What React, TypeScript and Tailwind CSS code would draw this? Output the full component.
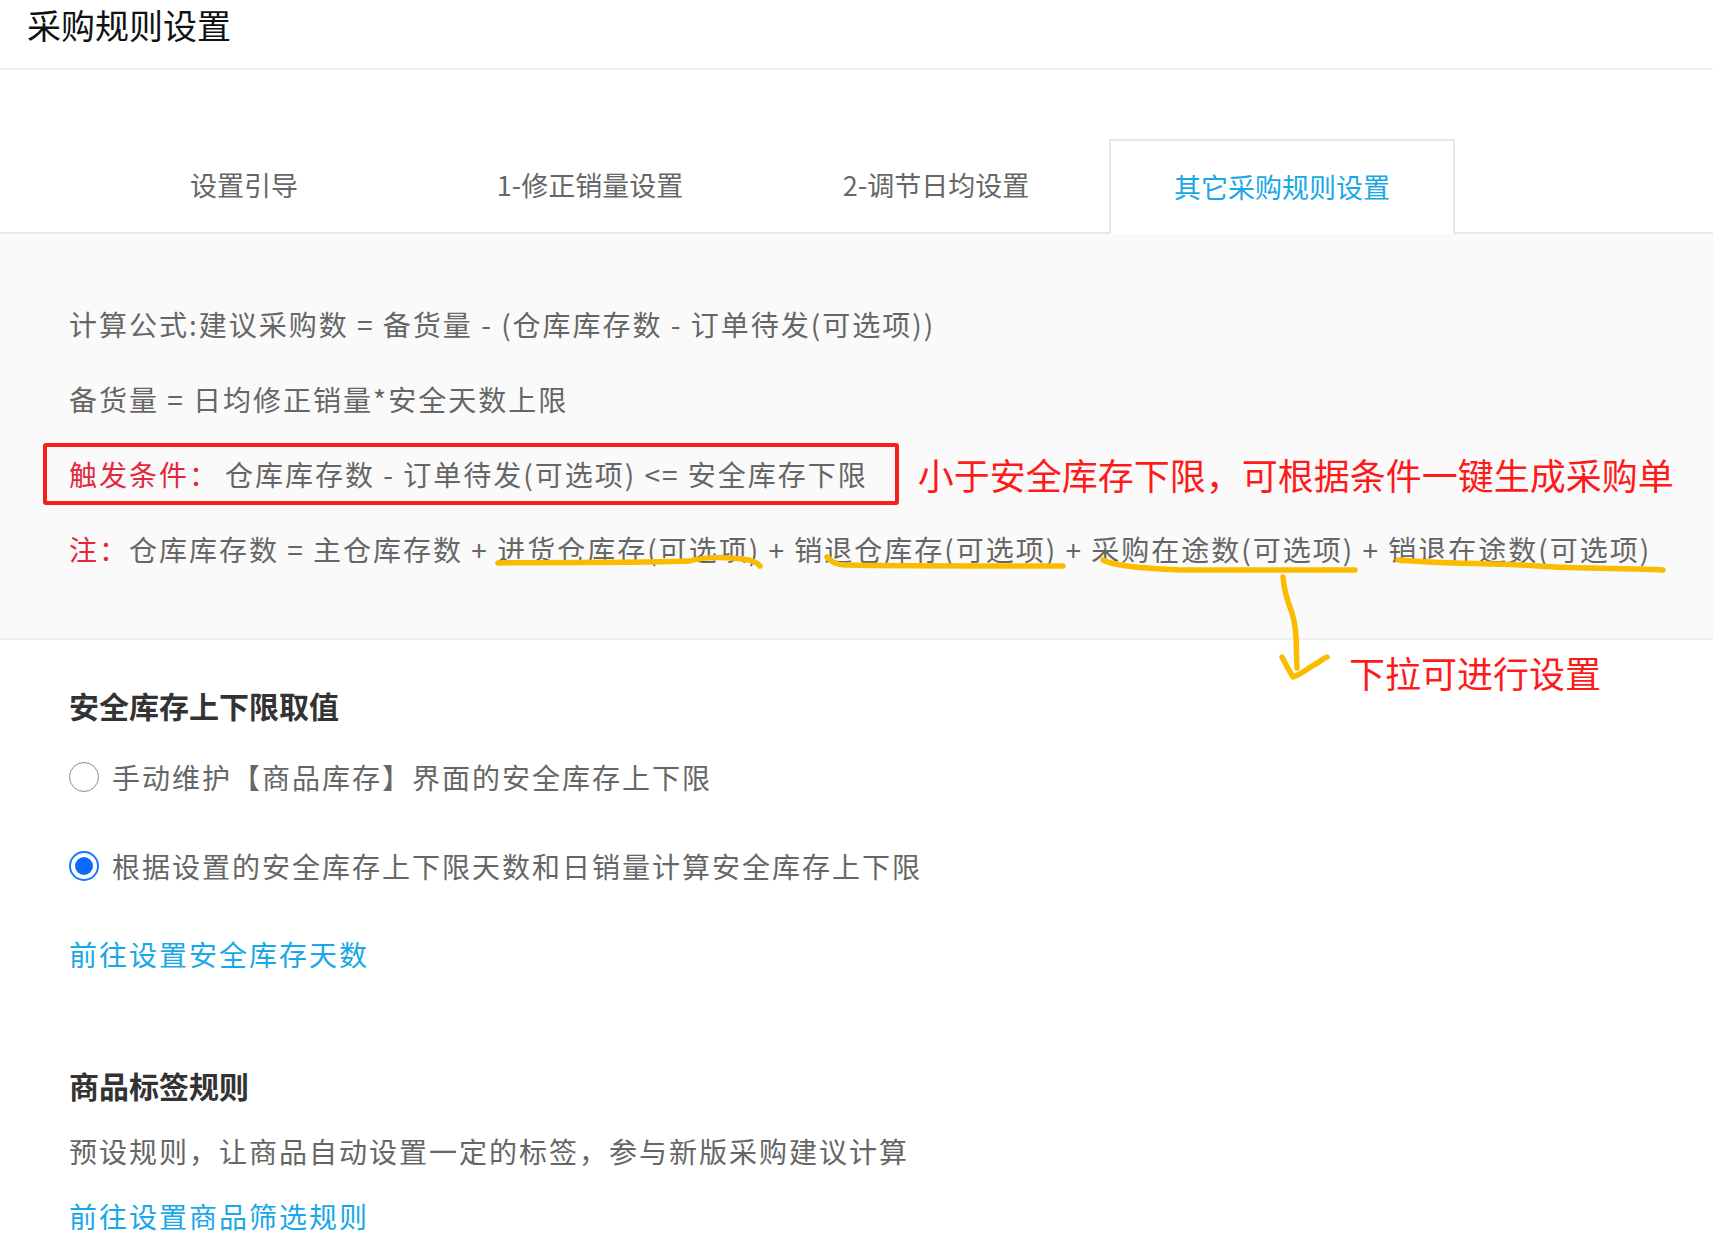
import React from 'react';

const tabs = ['设置引导', '1-修正销量设置', '2-调节日均设置', '其它采购规则设置'];

const Radio = ({ checked, label }: { checked?: boolean; label: string }) => (
  <label className="flex items-center h-[50px] cursor-pointer">
    {checked ? (
      <span className="w-[30px] h-[30px] rounded-full border-2 border-[#1677ff] flex items-center justify-center shrink-0">
        <span className="w-[18px] h-[18px] rounded-full bg-[#0a6cff]" />
      </span>
    ) : (
      <span className="w-[30px] h-[30px] rounded-full border-[1.5px] border-[#8c8c8c] shrink-0" />
    )}
    <span className="ml-[13px]">{label}</span>
  </label>
);

const App: React.FC = () => {
  return (
    <div
      className="relative w-[1713px] min-h-[1240px] bg-white overflow-hidden"
      style={{ fontFamily: '"Noto Sans CJK SC", "Noto Sans", sans-serif' }}
    >
      {/* page header */}
      <header className="h-[70px] border-b-2 border-[#eeeeee] pl-[27px] pt-[4px]">
        <h1 className="text-[34px] leading-[42px] text-[#111] font-normal">采购规则设置</h1>
      </header>

      {/* tabs */}
      <div className="pt-[69px] pl-[71px] border-b-2 border-[#e8e8e8] flex">
        {tabs.map((t, i) =>
          i === 3 ? (
            <div
              key={t}
              className="w-[346px] h-[95px] -mb-[2px] border-2 border-b-0 border-[#e8e8e8] bg-white flex items-center justify-center text-[27px] text-[#19a8e6]"
            >
              {t}
            </div>
          ) : (
            <div key={t} className="w-[346px] h-[93px] flex items-center justify-center text-[27px] text-[#666]">
              {t}
            </div>
          )
        )}
      </div>

      {/* formula block */}
      <div className="bg-[#fafafa] border-b-2 border-[#eeeeee] pl-[69px] pt-[52px] pb-[52px] text-[28px] tracking-[2px] text-[#666]">
        <div className="h-[75px] flex items-center">
          计算公式:建议采购数 = 备货量 - (仓库库存数 - 订单待发(可选项))
        </div>
        <div className="h-[75px] flex items-center">备货量 = 日均修正销量*安全天数上限</div>
        <div className="h-[75px] flex items-center">
          <div className="-ml-[26px] h-[62px] border-[4px] border-[#f5201a] rounded-[3px] pl-[22px] pr-[27px] flex items-center">
            <span className="text-[#e4283c]">触发条件：</span>
            <span className="ml-[6px]">仓库库存数 - 订单待发(可选项) &lt;= 安全库存下限</span>
          </div>
          <span className="ml-[19px] text-[36px] tracking-normal text-[#ff1a1a]">
            小于安全库存下限，可根据条件一键生成采购单
          </span>
        </div>
        <div className="h-[75px] flex items-center">
          <span className="text-[#e4283c]">注：</span>
          <span>
            仓库库存数 = 主仓库存数 + 进货仓库存(可选项) + 销退仓库存(可选项) + 采购在途数(可选项) + 销退在途数(可选项)
          </span>
        </div>
      </div>

      {/* settings */}
      <div className="pl-[69px] pt-[40px] flex flex-col items-start text-[28px] tracking-[2px] text-[#666]">
        <h2 className="h-[50px] flex items-center text-[30px] font-bold tracking-normal text-[#333]">安全库存上下限取值</h2>
        <div className="mt-[22px]">
          <Radio label="手动维护【商品库存】界面的安全库存上下限" />
        </div>
        <div className="mt-[39px]">
          <Radio checked label="根据设置的安全库存上下限天数和日销量计算安全库存上下限" />
        </div>
        <a className="mt-[38px] h-[50px] flex items-center text-[#19a8e6] cursor-pointer">前往设置安全库存天数</a>

        <h2 className="mt-[81px] h-[50px] flex items-center text-[30px] font-bold tracking-normal text-[#333]">商品标签规则</h2>
        <p className="mt-[16px] h-[50px] flex items-center">预设规则，让商品自动设置一定的标签，参与新版采购建议计算</p>
        <a className="mt-[15px] h-[50px] flex items-center text-[#19a8e6] cursor-pointer">前往设置商品筛选规则</a>
      </div>

      {/* hand-drawn annotations */}
      <svg
        className="absolute left-0 top-0 pointer-events-none"
        width="1713"
        height="1240"
        viewBox="0 0 1713 1240"
        fill="none"
        stroke="#fbbc00"
        strokeWidth="5.5"
        strokeLinecap="round"
        strokeLinejoin="round"
      >
        <path d="M498 563 C560 562 640 563 690 561 C702 557 722 557 742 559 C752 560 757 562 760 566" />
        <path d="M827 557 C832 562 836 565 845 565 C900 566 990 566 1063 566" />
        <path d="M1103 560 C1115 566 1140 568 1180 570 C1240 570 1300 570 1355 570" />
        <path d="M1398 560 C1440 564 1490 563 1538 566 C1580 569 1630 568 1663 570" />
        <path d="M1283 577 C1284 590 1287 600 1292 613 C1297 628 1296 645 1297 668" />
        <path d="M1282 657 C1286 665 1290 672 1293 677 C1302 674 1308 668 1314 665 C1320 662 1322 659 1327 657" />
      </svg>
      <span className="absolute left-[1349px] top-[650px] text-[36px] leading-[44px] text-[#ff1a1a]">下拉可进行设置</span>
    </div>
  );
};

export default App;
